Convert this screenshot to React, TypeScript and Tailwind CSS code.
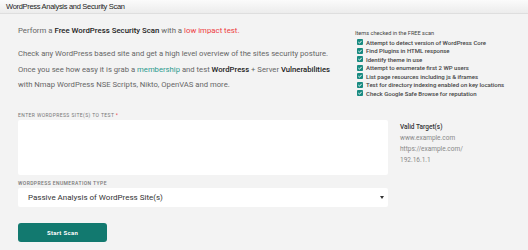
import React from 'react';

const checks = [
  'Attempt to detect version of WordPress Core',
  'Find Plugins in HTML response',
  'Identify theme in use',
  'Attempt to enumerate first 2 WP users',
  'List page resources including js & iframes',
  'Test for directory indexing enabled on key locations',
  'Check Google Safe Browse for reputation',
];

const CheckBox = () => (
  <svg width="6" height="6" viewBox="0 0 10 10" className="shrink-0">
    <rect x="0" y="0" width="10" height="10" rx="1.5" fill="#178a80" />
    <path d="M2.3 5.2 L4.2 7 L7.8 3" stroke="#fff" strokeWidth="1.6" fill="none" />
  </svg>
);

const App = () => {
  return (
    <div className="w-[528px] h-[250px] overflow-hidden bg-[#f3f3f3] font-['Roboto',sans-serif]">
      <div className="h-[14px] bg-gradient-to-b from-[#fbfbfb] to-[#ececec] border-b border-[#dedede] flex items-center px-[6px]">
        <span className="text-[7.5px] text-[#222] tracking-[-0.3px] font-['Liberation_Sans',sans-serif]">
          WordPress Analysis and Security Scan
        </span>
      </div>

      <div className="flex px-[18px] h-[97px]">
        <div className="w-[335px] shrink-0">
          <p className="mt-[11px] text-[7.8px] leading-[12px] text-[#666]">
            Perform a <b className="font-medium text-[#222]">Free WordPress Security Scan</b> with a{' '}
            <span className="text-[#ee3b42]">low impact test.</span>
          </p>
          <p className="mt-[9px] text-[7.7px] leading-[15.5px] text-[#666] whitespace-nowrap">
            Check any WordPress based site and get a high level overview of the sites security posture.
            <br />
            Once you see how easy it is grab a <span className="text-[#2a9a8e]">membership</span> and test{' '}
            <b className="font-medium text-[#222]">WordPress</b> + Server{' '}
            <b className="font-medium text-[#222]">Vulnerabilities</b>
            <br />
            with Nmap WordPress NSE Scripts, Nikto, OpenVAS and more.
          </p>
        </div>
        <div className="ml-[2px] pt-[15px]">
          <div className="text-[5.6px] leading-[8px] text-[#444]">Items checked in the FREE scan</div>
          <ul className="mt-[1px] ml-[2px]">
            {checks.map((c) => (
              <li key={c} className="flex items-center gap-[3px] h-[8.5px] text-[6px] font-medium text-[#444] whitespace-nowrap">
                <CheckBox />
                {c}
              </li>
            ))}
          </ul>
        </div>
      </div>

      <div className="flex px-[18px]">
        <div className="w-[370px] shrink-0">
          <div className="text-[5px] leading-[8px] tracking-[0.4px] text-[#777] uppercase">
            Enter WordPress site(s) to test <span className="text-[#ee3b42]">*</span>
          </div>
          <div className="mt-[1px] h-[55px] bg-white rounded-[2px]" />
          <div className="mt-[4px] text-[5px] leading-[8px] tracking-[0.4px] text-[#777] uppercase font-medium">
            Wordpress enumeration type
          </div>
          <div className="mt-[1px] h-[19px] bg-white rounded-[2px] flex items-center justify-between pl-[10px] pr-[4px]">
            <span className="text-[8px] text-[#333]">Passive Analysis of WordPress Site(s)</span>
            <svg width="4" height="3" viewBox="0 0 4 3">
              <path d="M0 0 L4 0 L2 3 Z" fill="#333" />
            </svg>
          </div>
          <button className="mt-[16px] w-[89px] h-[19px] rounded-[3px] bg-[#12796f] text-white text-[6px] font-bold tracking-[0.3px]">
            Start Scan
          </button>
        </div>
        <div className="ml-[12px] pt-[11px]">
          <div className="text-[6.5px] leading-[11px] font-medium text-[#333]">Valid Target(s)</div>
          <div className="text-[6.5px] leading-[11px] text-[#888]">www.example.com</div>
          <div className="text-[6.5px] leading-[11px] text-[#888]">https://example.com/</div>
          <div className="text-[6.5px] leading-[11px] text-[#888]">192.16.1.1</div>
        </div>
      </div>
    </div>
  );
};

export default App;
